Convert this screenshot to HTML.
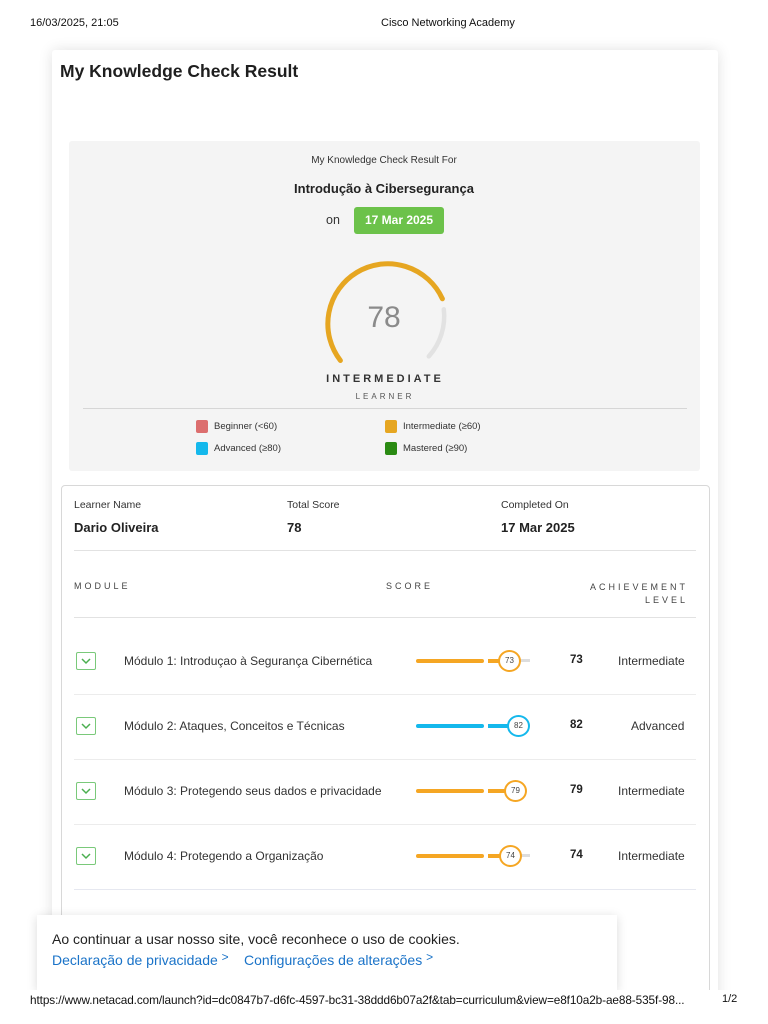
<!DOCTYPE html>
<html><head><meta charset="utf-8"><style>
*{margin:0;padding:0;box-sizing:border-box}
body{width:768px;height:1024px;background:#fff;font-family:"Liberation Sans",Arial,sans-serif;color:#222;position:relative;overflow:hidden}
.a{position:absolute;white-space:nowrap}
.hdr{font-size:11px;color:#111;top:17px}
.card{left:52px;top:50px;width:666px;height:960px;background:#fff;box-shadow:0 0 14px rgba(0,0,0,.12);border-radius:3px}
.gray{left:69px;top:141px;width:631px;height:330px;background:#f4f4f4;border-radius:3px}
.box{left:61px;top:485px;width:649px;height:510px;border:1px solid #d8d8d8;border-radius:4px;background:#fff}
.c{transform:translateX(-50%)}
.sm{font-size:9.5px;color:#333}
.lbl{font-size:10.5px;color:#333}
.val{font-size:13px;font-weight:bold;color:#222}
.hr{height:1px;background:#e2e2e2}
.cap{font-size:9px;letter-spacing:3px;color:#444}
.chk{width:20px;height:18px;border:1px solid #7ac97a;border-radius:2px}
.mod{font-size:12px;color:#333}
.sc{font-size:11.5px;font-weight:bold;color:#222}
.lv{font-size:12px;color:#333}
</style></head><body>
<div class="a hdr" style="left:30px">16/03/2025, 21:05</div>
<div class="a hdr" style="left:381px">Cisco Networking Academy</div>

<div class="a card"></div>
<div class="a" style="left:60px;top:61px;font-size:17.5px;font-weight:bold;color:#1e1e1e">My Knowledge Check Result</div>

<div class="a gray"></div>
<div class="a c sm" style="left:384px;top:155px;font-size:10px">My Knowledge Check Result For</div>
<div class="a c" style="left:384px;top:181px;font-size:13px;font-weight:bold">Introdução à Cibersegurança</div>
<div class="a" style="left:326px;top:213px;font-size:12.5px;color:#333">on</div>
<div class="a" style="left:354px;top:207px;width:90px;height:27px;background:#6cc24a;border-radius:3px;color:#fff;font-size:12px;font-weight:bold;text-align:center;line-height:27px">17 Mar 2025</div>
<svg class="a" style="left:314px;top:252px" width="140" height="120" viewBox="0 0 140 120">
<path d="M26.4 108.5 A60 60 0 1 1 128.4 46.8" fill="none" stroke="#e6a621" stroke-width="5" stroke-linecap="round"/>
<path d="M129.8 57.3 A60 60 0 0 1 114.8 104.4" fill="none" stroke="#e2e2e2" stroke-width="4.5" stroke-linecap="round"/>
<text x="70" y="75" text-anchor="middle" font-family="Liberation Sans,sans-serif" font-size="30" fill="#8a8a8a">78</text>
</svg>
<div class="a c" style="left:385px;top:373px;font-size:11px;font-weight:bold;letter-spacing:3px;color:#333">INTERMEDIATE</div>
<div class="a c" style="left:385px;top:392px;font-size:8px;letter-spacing:3px;color:#555">LEARNER</div>
<div class="a hr" style="left:83px;top:408px;width:604px;background:#d6d6d6"></div>
<div class="a" style="left:196px;top:420px;width:12px;height:13px;background:#dc6e6e;border-radius:2px"></div>
<div class="a sm" style="left:214px;top:421px">Beginner (&lt;60)</div>
<div class="a" style="left:385px;top:420px;width:12px;height:13px;background:#e6a621;border-radius:2px"></div>
<div class="a sm" style="left:403px;top:421px">Intermediate (≥60)</div>
<div class="a" style="left:196px;top:442px;width:12px;height:13px;background:#14b8ec;border-radius:2px"></div>
<div class="a sm" style="left:214px;top:443px">Advanced (≥80)</div>
<div class="a" style="left:385px;top:442px;width:12px;height:13px;background:#2a8a12;border-radius:2px"></div>
<div class="a sm" style="left:403px;top:443px">Mastered (≥90)</div>

<div class="a box"></div>
<div class="a lbl" style="left:74px;top:499px">Learner Name</div>
<div class="a val" style="left:74px;top:520px">Dario Oliveira</div>
<div class="a lbl" style="left:287px;top:499px">Total Score</div>
<div class="a val" style="left:287px;top:520px">78</div>
<div class="a lbl" style="left:501px;top:499px">Completed On</div>
<div class="a val" style="left:501px;top:520px">17 Mar 2025</div>
<div class="a hr" style="left:74px;top:550px;width:622px"></div>
<div class="a cap" style="left:74px;top:581px">MODULE</div>
<div class="a cap" style="left:386px;top:581px">SCORE</div>
<div class="a cap" style="left:590px;top:581px;text-align:right;line-height:13px">ACHIEVEMENT<br>LEVEL</div>
<div class="a hr" style="left:74px;top:617px;width:622px"></div>

<div class="a chk" style="left:76px;top:652px"></div><svg class="a" style="left:81px;top:657px" width="10" height="8"><path d="M1 2 L5 6 L9 2" fill="none" stroke="#4caf50" stroke-width="1.5"/></svg>
<div class="a mod" style="left:124px;top:654px">Módulo 1: Introduçao à Segurança Cibernética</div>
<div class="a" style="left:416px;top:659px;width:68px;height:4px;background:#f5a623;border-radius:2px"></div>
<div class="a" style="left:488px;top:659px;width:14px;height:4px;background:#f5a623"></div>
<div class="a" style="left:520px;top:659px;width:10px;height:3px;background:#ddd"></div>
<div class="a" style="left:498px;top:650px;width:23px;height:22px;border:2px solid #f5a623;border-radius:50%;background:#fff;font-size:8px;text-align:center;line-height:18px;color:#444">73</div>
<div class="a sc" style="left:570px;top:654px">73</div>
<div class="a lv" style="left:618px;top:654px">Intermediate</div>
<div class="a hr" style="left:74px;top:694px;width:622px;background:#ececec"></div>

<div class="a chk" style="left:76px;top:717px"></div><svg class="a" style="left:81px;top:722px" width="10" height="8"><path d="M1 2 L5 6 L9 2" fill="none" stroke="#4caf50" stroke-width="1.5"/></svg>
<div class="a mod" style="left:124px;top:719px">Módulo 2: Ataques, Conceitos e Técnicas</div>
<div class="a" style="left:416px;top:724px;width:68px;height:4px;background:#14b8ec;border-radius:2px"></div>
<div class="a" style="left:488px;top:724px;width:22px;height:4px;background:#14b8ec"></div>
<div class="a" style="left:507px;top:715px;width:23px;height:22px;border:2px solid #14b8ec;border-radius:50%;background:#fff;font-size:8px;text-align:center;line-height:18px;color:#444">82</div>
<div class="a sc" style="left:570px;top:719px">82</div>
<div class="a lv" style="left:631px;top:719px">Advanced</div>
<div class="a hr" style="left:74px;top:759px;width:622px;background:#ececec"></div>

<div class="a chk" style="left:76px;top:782px"></div><svg class="a" style="left:81px;top:787px" width="10" height="8"><path d="M1 2 L5 6 L9 2" fill="none" stroke="#4caf50" stroke-width="1.5"/></svg>
<div class="a mod" style="left:124px;top:784px">Módulo 3: Protegendo seus dados e privacidade</div>
<div class="a" style="left:416px;top:789px;width:68px;height:4px;background:#f5a623;border-radius:2px"></div>
<div class="a" style="left:488px;top:789px;width:18px;height:4px;background:#f5a623"></div>
<div class="a" style="left:504px;top:780px;width:23px;height:22px;border:2px solid #f5a623;border-radius:50%;background:#fff;font-size:8px;text-align:center;line-height:18px;color:#444">79</div>
<div class="a sc" style="left:570px;top:784px">79</div>
<div class="a lv" style="left:618px;top:784px">Intermediate</div>
<div class="a hr" style="left:74px;top:824px;width:622px;background:#ececec"></div>

<div class="a chk" style="left:76px;top:847px"></div><svg class="a" style="left:81px;top:852px" width="10" height="8"><path d="M1 2 L5 6 L9 2" fill="none" stroke="#4caf50" stroke-width="1.5"/></svg>
<div class="a mod" style="left:124px;top:849px">Módulo 4: Protegendo a Organização</div>
<div class="a" style="left:416px;top:854px;width:68px;height:4px;background:#f5a623;border-radius:2px"></div>
<div class="a" style="left:488px;top:854px;width:14px;height:4px;background:#f5a623"></div>
<div class="a" style="left:520px;top:854px;width:10px;height:3px;background:#ddd"></div>
<div class="a" style="left:499px;top:845px;width:23px;height:22px;border:2px solid #f5a623;border-radius:50%;background:#fff;font-size:8px;text-align:center;line-height:18px;color:#444">74</div>
<div class="a sc" style="left:570px;top:849px">74</div>
<div class="a lv" style="left:618px;top:849px">Intermediate</div>
<div class="a hr" style="left:74px;top:889px;width:622px;background:#e6e8f0"></div>

<div class="a" style="left:37px;top:915px;width:580px;height:75px;background:#fff;box-shadow:0 2px 10px rgba(0,0,0,.15)"></div>
<div class="a" style="left:52px;top:931px;font-size:14px;color:#222">Ao continuar a usar nosso site, você reconhece o uso de cookies.</div>
<div class="a" style="left:52px;top:950px;font-size:14px;color:#1a73c8">Declaração de privacidade <span style="font-size:12px;vertical-align:4px">&gt;</span></div>
<div class="a" style="left:244px;top:950px;font-size:14px;color:#1a73c8">Configurações de alterações <span style="font-size:12px;vertical-align:4px">&gt;</span></div>

<div class="a" style="left:0;top:990px;width:768px;height:34px;background:#fff"></div>
<div class="a" style="left:30px;top:993px;font-size:11.8px;color:#111;letter-spacing:-0.1px">https://www.netacad.com/launch?id=dc0847b7-d6fc-4597-bc31-38ddd6b07a2f&amp;tab=curriculum&amp;view=e8f10a2b-ae88-535f-98...</div>
<div class="a" style="left:722px;top:993px;font-size:11px;color:#111">1/2</div>
</body></html>
